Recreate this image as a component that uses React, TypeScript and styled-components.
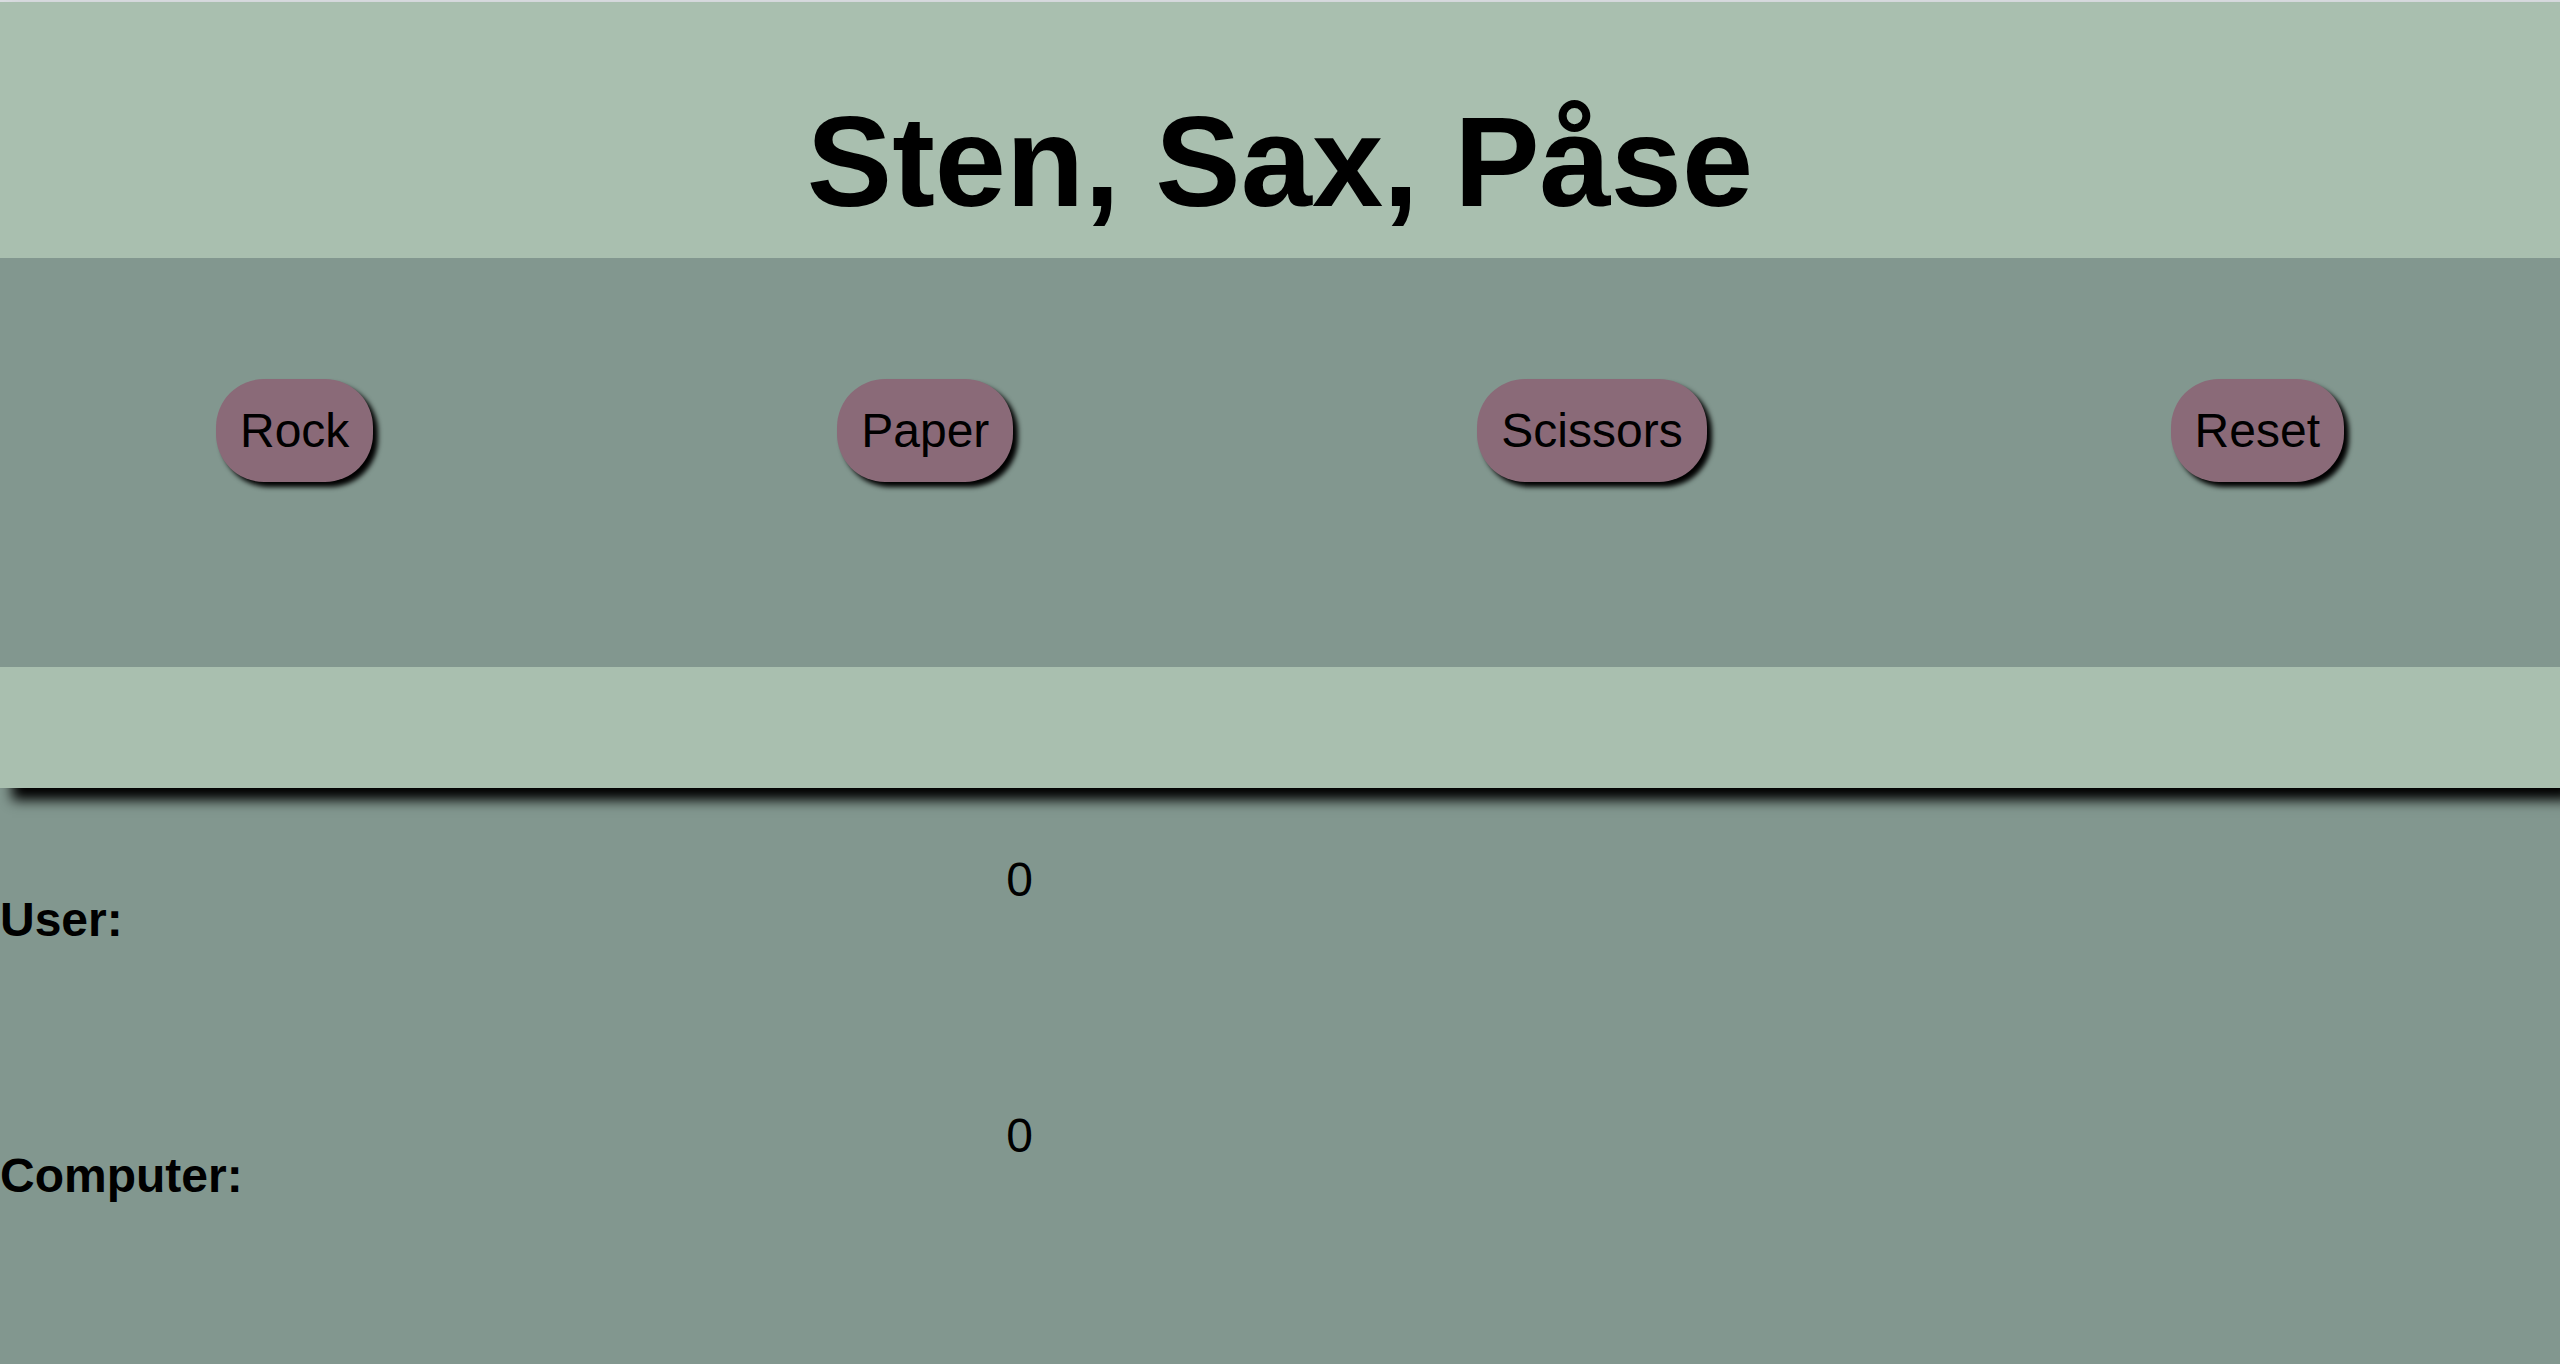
import { useState } from "react";
import styled, { createGlobalStyle } from "styled-components";

const GlobalStyle = createGlobalStyle`
  body {
    margin: 0;
    background: #82978f;
    color: #000;
    font-family: "Liberation Sans", Arial, sans-serif;
    font-size: 48px;
    line-height: 55px;
  }
`;

const Page = styled.div`
  min-height: 100vh;
  box-sizing: border-box;
  border-top: 2px solid #d9dce0;
`;

const Board = styled.header`
  background: #a9bfaf;
  padding: 86px 0 121px;
  box-shadow: 12px 12px 12px #000;
`;

const Title = styled.h1`
  margin: 0 0 22px;
  font-size: 128px;
  line-height: 148px;
  text-align: center;
`;

const Controls = styled.nav`
  display: flex;
  flex-wrap: wrap;
  justify-content: space-around;
  gap: 32px;
  padding: 121px 0 185px;
  background: #82978f;
`;

const GameButton = styled.button`
  padding: 24px;
  border: 0;
  border-radius: 48px;
  background: #8a6a78;
  color: inherit;
  font: inherit;
  box-shadow: 5px 5px 5px #000;
  cursor: pointer;
`;

const Scores = styled.dl`
  display: grid;
  grid-template-columns: repeat(3, auto);
  row-gap: 121px;
  margin: 0;
  padding-top: 64px;
`;

const Player = styled.dt`
  grid-column: 1;
  padding: 40px 0;
  font-weight: bold;
`;

const Points = styled.dd`
  grid-column: 2;
  margin: 0;
`;

const moves = ["Rock", "Paper", "Scissors"];

export default function App() {
  const [score, setScore] = useState({ user: 0, computer: 0 });

  const play = (move: number) => {
    const reply = Math.floor(Math.random() * moves.length);
    const result = (move - reply + moves.length) % moves.length;
    if (result === 1) setScore((s) => ({ ...s, user: s.user + 1 }));
    if (result === 2) setScore((s) => ({ ...s, computer: s.computer + 1 }));
  };

  return (
    <Page>
      <GlobalStyle />
      <Board>
        <Title>Sten, Sax, Påse</Title>
        <Controls>
          {moves.map((name, index) => (
            <GameButton key={name} type="button" onClick={() => play(index)}>
              {name}
            </GameButton>
          ))}
          <GameButton type="button" onClick={() => setScore({ user: 0, computer: 0 })}>
            Reset
          </GameButton>
        </Controls>
      </Board>
      <main>
        <Scores>
          <Player>User:</Player>
          <Points>{score.user}</Points>
          <Player>Computer:</Player>
          <Points>{score.computer}</Points>
        </Scores>
      </main>
    </Page>
  );
}
